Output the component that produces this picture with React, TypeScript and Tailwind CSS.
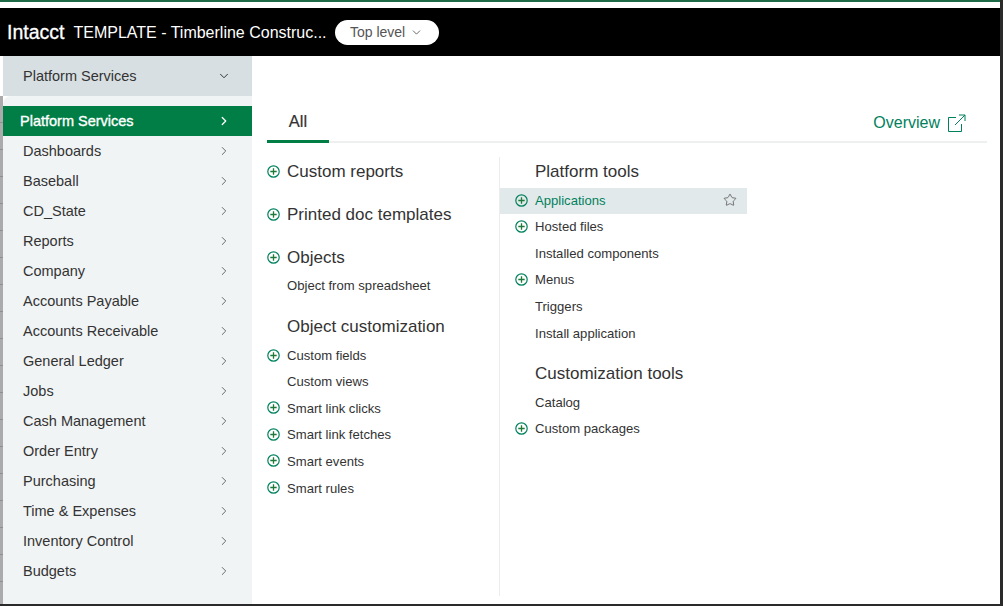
import { ChevronDown, ChevronRight, Star } from "lucide-react"

const MENU = [
  "Dashboards",
  "Baseball",
  "CD_State",
  "Reports",
  "Company",
  "Accounts Payable",
  "Accounts Receivable",
  "General Ledger",
  "Jobs",
  "Cash Management",
  "Order Entry",
  "Purchasing",
  "Time & Expenses",
  "Inventory Control",
  "Budgets",
]

function PlusIcon() {
  return (
    <svg width="13" height="13" viewBox="0 0 13 13" fill="none" className="shrink-0">
      <circle cx="6.5" cy="6.5" r="5.7" stroke="#00815d" strokeWidth="1.2" />
      <path d="M6.5 3.3v6.4M3.3 6.5h6.4" stroke="#1f7a3a" strokeWidth="1.3" />
    </svg>
  )
}

function Heading({ label, plus, className }: { label: string; plus?: boolean; className?: string }) {
  return (
    <div className={`flex items-center h-[20px] ${className ?? ""}`}>
      <span className="w-[20px] shrink-0 mb-[2px]">{plus && <PlusIcon />}</span>
      <span className="text-[17px] text-[#333]">{label}</span>
    </div>
  )
}

function Item({ label, plus, h = "h-[27px]" }: { label: string; plus?: boolean; h?: string }) {
  return (
    <div className={`flex items-center text-[13.1px] text-[#333] ${h}`}>
      <span className="w-[20px] shrink-0 mb-[2px]">{plus && <PlusIcon />}</span>
      {label}
    </div>
  )
}

export default function App() {
  return (
    <div className="h-[606px] w-[1003px] overflow-hidden bg-white font-['Liberation_Sans',sans-serif] flex flex-col border-r-[3px] border-b-2 border-[#2a2a2a]">
      <div className="h-[8px] bg-white border-t-2 border-[#1d6b46] shrink-0" />

      {/* Top bar */}
      <div className="h-[48px] bg-black flex items-center pl-[7px] text-white shrink-0">
        <span className="pt-[2px] text-[19.5px] [-webkit-text-stroke:0.3px_white]">Intacct</span>
        <span className="pt-[2px] ml-[9px] text-[16px]">TEMPLATE - Timberline Construc...</span>
        <div className="ml-[8px] w-[104px] h-[25px] rounded-full bg-white text-[#555] text-[14px] flex items-center justify-center gap-[5px]">
          Top level
          <ChevronDown size={13} strokeWidth={1.6} />
        </div>
      </div>

      <div className="flex-1 flex min-h-0">
        <div className="w-[3px] shrink-0 flex flex-col">
          <div className="h-[40px] bg-white" />
          <div className="flex-1 bg-[#ababab] bg-[repeating-linear-gradient(180deg,transparent_0,transparent_26px,#8f8f8f_26px,#8f8f8f_27px)]" />
        </div>

        {/* Left menu */}
        <div className="w-[249px] shrink-0 flex flex-col">
          <div className="h-[40px] bg-[#d8dfe2] flex items-center justify-between pl-[20px] pr-[21px] text-[14.5px] text-[#333] shrink-0">
            <span className="pt-[2px]">Platform Services</span>
            <ChevronDown size={14} strokeWidth={1.7} />
          </div>
          <div className="flex-1 bg-[#f1f4f5] rounded-tl-[8px] pt-[10px]">
            <div className="h-[30px] bg-[#007e45] text-white text-[14.5px] [-webkit-text-stroke:0.35px_white] flex items-center justify-between pl-[17px] pr-[21px]">
              <span className="pt-[2px]">Platform Services</span>
              <ChevronRight size={14} strokeWidth={2.2} />
            </div>
            {MENU.map((m) => (
              <div key={m} className="h-[30px] flex items-center justify-between pl-[20px] pr-[21px] text-[14.5px] text-[#333]">
                <span className="pt-[2px]">{m}</span>
                <ChevronRight size={14} strokeWidth={1.7} className="text-[#666]" />
              </div>
            ))}
          </div>
        </div>

        {/* Content */}
        <div className="flex-1 flex flex-col min-w-0 pl-[15px] pr-[13px] pt-[46px]">
          <div className="h-[41px] flex items-start justify-between border-b-2 border-[#eef0f0] shrink-0">
            <div className="w-[62px] h-[41px] border-b-[3px] border-[#007e45] text-center text-[16.5px] [-webkit-text-stroke:0.2px_#333] text-[#333] pt-[7px]">
              All
            </div>
            <div className="flex items-center gap-[7px] text-[#00815d] text-[16px] pt-[9px] pr-[21px]">
              Overview
              <svg width="19" height="19" viewBox="0 0 19 19" fill="none" stroke="#00815d" strokeWidth="1">
                <path d="M9 3.5H1.5v14h13V10M8 11L18 1M12 1h6v6" />
              </svg>
            </div>
          </div>

          <div className="flex flex-1 min-h-0">
            <div className="w-[233px] shrink-0 border-r border-[#ececec] mt-[14px] mb-[8px] pt-[5px]">
              <Heading label="Custom reports" plus />
              <Heading label="Printed doc templates" plus className="mt-[23px]" />
              <Heading label="Objects" plus className="mt-[23px]" />
              <Item label="Object from spreadsheet" h="h-[28px] mt-[4px]" />
              <Heading label="Object customization" className="mt-[17px]" />
              <Item label="Custom fields" plus h="h-[26px] mt-[6px]" />
              <Item label="Custom views" h="h-[26px]" />
              <Item label="Smart link clicks" plus />
              <Item label="Smart link fetches" plus h="h-[26px]" />
              <Item label="Smart events" plus />
              <Item label="Smart rules" plus />
            </div>

            <div className="w-[247px] shrink-0 mt-[14px] pt-[5px]">
              <Heading label="Platform tools" className="pl-[15px]" />
              <div className="flex items-center h-[26px] mt-[6px] bg-[#e2e9ea] pl-[15px] pr-[10px] text-[13.1px] text-[#00815d]">
                <span className="w-[20px] shrink-0 mb-[2px]"><PlusIcon /></span>
                <span className="flex-1">Applications</span>
                <Star size={14} strokeWidth={1.2} className="text-[#444] mb-[2px]" />
              </div>
              <div className="pl-[15px]">
                <Item label="Hosted files" plus h="h-[26px]" />
                <Item label="Installed components" />
                <Item label="Menus" plus h="h-[26px]" />
                <Item label="Triggers" />
                <Item label="Install application" />
              </div>
              <Heading label="Customization tools" className="pl-[15px] mt-[17px]" />
              <div className="pl-[15px] mt-[6px]">
                <Item label="Catalog" h="h-[26px]" />
                <Item label="Custom packages" plus h="h-[26px]" />
              </div>
            </div>
          </div>
        </div>
      </div>
    </div>
  )
}
